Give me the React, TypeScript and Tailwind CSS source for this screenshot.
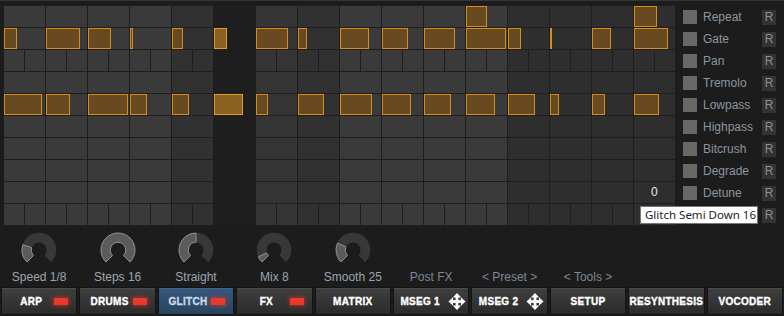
import React from "react";

const COL_BG = [
  "bg-[#3a3a3a]",
  "bg-[#3a3a3a]",
  "bg-[#3a3a3a]",
  "bg-[#3a3a3a]",
  "bg-[#313131]",
  "bg-transparent",
  "bg-[#353535]",
  "bg-[#313131]",
  "bg-[#3a3a3a]",
  "bg-[#3a3a3a]",
  "bg-[#3a3a3a]",
  "bg-[#3a3a3a]",
  "bg-[#2e2e2e]",
  "bg-[#2e2e2e]",
  "bg-[#2e2e2e]",
  "bg-[#2e2e2e]",
];

const BLOCKS: Record<number, [number, number][]> = {
  0: [
    [11, 21],
    [15, 23],
  ],
  1: [
    [0, 13],
    [1, 34],
    [2, 23],
    [3, 3],
    [4, 11],
    [5, 13],
    [6, 32],
    [7, 9],
    [8, 29],
    [9, 26],
    [10, 31],
    [11, 40],
    [12, 13],
    [13, 1],
    [14, 19],
    [15, 34],
  ],
  4: [
    [0, 38],
    [1, 24],
    [2, 40],
    [3, 17],
    [4, 17],
    [5, 29],
    [6, 12],
    [7, 26],
    [8, 32],
    [9, 29],
    [10, 27],
    [11, 29],
    [12, 27],
    [13, 9],
    [14, 13],
    [15, 25],
  ],
};

const ROWS = [
  "Repeat",
  "Gate",
  "Pan",
  "Tremolo",
  "Lowpass",
  "Highpass",
  "Bitcrush",
  "Degrade",
  "Detune",
  "",
];

function Cell({ row, col }: { row: number; col: number }) {
  const dark = col === 5;
  const split = (row === 2 || row === 9) && !dark;
  const block = BLOCKS[row]?.find((b) => b[0] === col);
  return (
    <div className={`relative h-[21px] w-[41px] ${split ? "flex gap-px" : COL_BG[col]}`}>
      {split && (
        <>
          <div className={`flex-1 ${COL_BG[col]}`} />
          <div className={`flex-1 ${COL_BG[col]}`} />
        </>
      )}
      {block && (
        <div
          className={`absolute left-0 top-0 h-[21px] border ${
            dark ? "border-[#e39a26] bg-[#8a601f]" : "border-[#d68d1e] bg-[#674a1f]"
          }`}
          style={{ width: block[1] }}
        />
      )}
      {row === 8 && col === 15 && (
        <span className="absolute left-[17px] top-[2px] text-[12px] leading-[16px] text-[#e8e8e8]">0</span>
      )}
    </div>
  );
}

function pt(cx: number, cy: number, r: number, a: number) {
  const rad = (a * Math.PI) / 180;
  return [cx + r * Math.sin(rad), cy - r * Math.cos(rad)];
}

function sector(a0: number, a1: number, ro: number, ri: number) {
  const c = 18;
  const [x0, y0] = pt(c, c, ro, a0);
  const [x1, y1] = pt(c, c, ro, a1);
  const [x2, y2] = pt(c, c, ri, a1);
  const [x3, y3] = pt(c, c, ri, a0);
  const large = a1 - a0 > 180 ? 1 : 0;
  return `M${x0} ${y0} A${ro} ${ro} 0 ${large} 1 ${x1} ${y1} L${x2} ${y2} A${ri} ${ri} 0 ${large} 0 ${x3} ${y3} Z`;
}

function Knob({ end }: { end: number }) {
  return (
    <svg width="36" height="36" viewBox="0 0 36 36">
      <path d={sector(-135, 135, 17.3, 7.5)} fill="#383838" />
      <path d={sector(-135, end, 17, 7.8)} fill="#5b5b5b" stroke="#8f8f8f" strokeWidth="1" />
    </svg>
  );
}

function MoveIcon() {
  return (
    <svg width="18" height="17" viewBox="0 0 18 18" fill="#ffffff">
      <rect x="3" y="7.5" width="12" height="3" />
      <rect x="7.5" y="3" width="3" height="12" />
      <polygon points="9,0 4.6,4.8 13.4,4.8" />
      <polygon points="9,18 4.6,13.2 13.4,13.2" />
      <polygon points="0,9 4.8,4.6 4.8,13.4" />
      <polygon points="18,9 13.2,4.6 13.2,13.4" />
    </svg>
  );
}

function Btn({
  label,
  led,
  move,
  active,
}: {
  label: string;
  led?: boolean;
  move?: boolean;
  active?: boolean;
}) {
  return (
    <div
      className={`flex h-[28px] items-center border border-[#141414] text-[10px] font-bold tracking-[0.3px] shadow-[inset_0_1px_0_rgba(255,255,255,0.07)] ${
        active
          ? "bg-linear-to-b from-[#36587d] to-[#28445f] text-[#c9d8ea] [-webkit-text-stroke:0.35px_#c9d8ea]"
          : "bg-linear-to-b from-[#3f3f3f] to-[#2b2b2b] text-white [-webkit-text-stroke:0.35px_#ffffff]"
      }`}
    >
      {led ? (
        <>
          <span className="flex-1 pl-[6px] text-center">{label}</span>
          <span className="mr-[8px] h-[7px] w-[14px] bg-[#e8392d] shadow-[0_0_4px_1px_rgba(255,50,30,0.55)]" />
        </>
      ) : move ? (
        <span className="flex flex-1 items-center justify-center gap-[8px] pl-[4px]">
          <span>{label}</span>
          <MoveIcon />
        </span>
      ) : (
        <span className="flex-1 text-center">{label}</span>
      )}
    </div>
  );
}

const KNOBS = [
  { end: -72, label: "Speed 1/8" },
  { end: 135, label: "Steps 16" },
  { end: 0, label: "Straight" },
  { end: -113, label: "Mix 8" },
  { end: -66, label: "Smooth 25" },
];

export default function App() {
  return (
    <div className="relative h-[316px] w-[784px] overflow-hidden border-t border-[#343434] bg-[#1c1c1c] font-['Liberation_Sans',Arial,sans-serif]">
      <div className="flex pt-[4px]">
        <div className="ml-[3px] grid grid-cols-[repeat(16,41px)] auto-rows-[21px] gap-px bg-[#1e1e1e] pl-px pt-px">
          {ROWS.map((_, r) =>
            Array.from({ length: 16 }).map((__, c) => <Cell key={`${r}-${c}`} row={r} col={c} />)
          )}
        </div>
        <div className="flex flex-1 flex-col pt-px">
          {ROWS.map((name, i) => (
            <div key={i} className="flex h-[22px] items-center pl-[8px] pr-[8px]">
              <span className="h-[14px] w-[14px] bg-[#686868]" />
              <span className="ml-[6px] text-[12px] text-[#8b95a0]">{name}</span>
              <span className="ml-auto flex h-[15px] w-[14px] items-center justify-center bg-[#333333] text-[12px] text-[#8e8e8e]">
                R
              </span>
            </div>
          ))}
        </div>
      </div>

      <div className="mt-[6px] grid grid-cols-10 gap-[2px] px-px">
        {KNOBS.map((k, i) => (
          <div key={i} className="flex h-[36px] justify-center">
            <Knob end={k.end} />
          </div>
        ))}
      </div>

      <div className="mt-px grid h-[16px] grid-cols-10 gap-[2px] px-px text-[12px] leading-[16px]">
        {KNOBS.map((k, i) => (
          <div key={i} className="text-center text-[#9ba5af]">
            {k.label}
          </div>
        ))}
        <div className="text-center text-[#7b8793]">Post FX</div>
        <div className="text-center text-[#7b8793]">&lt; Preset &gt;</div>
        <div className="text-center text-[#7b8793]">&lt; Tools &gt;</div>
      </div>

      <div className="mt-[2px] grid grid-cols-10 gap-[2px] px-px">
        <Btn label="ARP" led />
        <Btn label="DRUMS" led />
        <Btn label="GLITCH" led active />
        <Btn label="FX" led />
        <Btn label="MATRIX" />
        <Btn label="MSEG 1" move />
        <Btn label="MSEG 2" move />
        <Btn label="SETUP" />
        <Btn label="RESYNTHESIS" />
        <Btn label="VOCODER" />
      </div>

      <div className="absolute left-[640px] top-[205px] flex h-[18px] w-[118px] items-center border border-[#767676] bg-white pl-[4px] font-['Noto_Sans',sans-serif] text-[11.5px] text-[#222222]">
        Glitch Semi Down 16
      </div>
    </div>
  );
}
